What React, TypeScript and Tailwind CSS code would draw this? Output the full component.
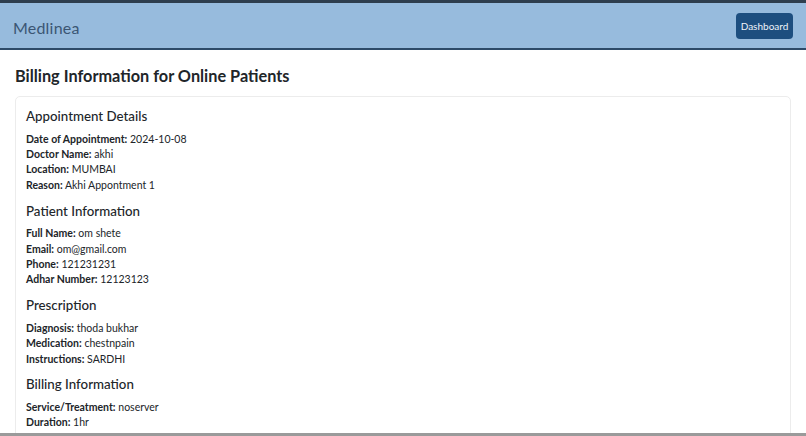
const sections = [
  {
    title: "Appointment Details",
    rows: [
      ["Date of Appointment:", "2024-10-08"],
      ["Doctor Name:", "akhi"],
      ["Location:", "MUMBAI"],
      ["Reason:", "Akhi Appontment 1"],
    ],
  },
  {
    title: "Patient Information",
    rows: [
      ["Full Name:", "om shete"],
      ["Email:", "om@gmail.com"],
      ["Phone:", "121231231"],
      ["Adhar Number:", "12123123"],
    ],
  },
  {
    title: "Prescription",
    rows: [
      ["Diagnosis:", "thoda bukhar"],
      ["Medication:", "chestnpain"],
      ["Instructions:", "SARDHI"],
    ],
  },
  {
    title: "Billing Information",
    rows: [
      ["Service/Treatment:", "noserver"],
      ["Duration:", "1hr"],
      ["Cost:", "1000"],
      ["Status:", "Paid"],
    ],
  },
]

export default function App() {
  return (
    <div
      className="h-[436px] overflow-hidden bg-white text-[#212529] border-b-[3px] border-[#9a9a9a] flex flex-col"
      style={{ fontFamily: 'Lato, "Open Sans", sans-serif' }}
    >
      <div className="h-[3px] bg-[#2e3e4e] shrink-0" />
      <nav className="h-[47px] shrink-0 bg-[#97bbdd] border-b-2 border-[#2d4a68] flex items-center justify-between pl-[13px] pr-[13px]">
        <span className="text-[16px] text-[#3b5674] tracking-[0.2px] pt-[5px]">
          Medlinea
        </span>
        <button className="h-[26px] w-[57px] rounded-[4px] bg-[#1d4e7f] text-[#eef3f9] text-[10px] leading-none">
          Dashboard
        </button>
      </nav>
      <main className="px-[15px] pt-[15px]">
        <h1 className="text-[16.3px] font-bold leading-[22px] mb-[9px]">
          Billing Information for Online Patients
        </h1>
        <div className="border border-[#ececec] rounded-[5px] px-[10px] pt-[10px]">
          {sections.map((s) => (
            <section key={s.title} className="mb-[8.5px]">
              <h5 className="text-[13.3px] leading-[18px] font-medium mb-[6.5px]">
                {s.title}
              </h5>
              {s.rows.map(([k, v]) => (
                <p key={k} className="text-[10.5px] leading-[15.4px]">
                  <strong className="font-bold">{k}</strong> {v}
                </p>
              ))}
            </section>
          ))}
        </div>
      </main>
    </div>
  )
}
